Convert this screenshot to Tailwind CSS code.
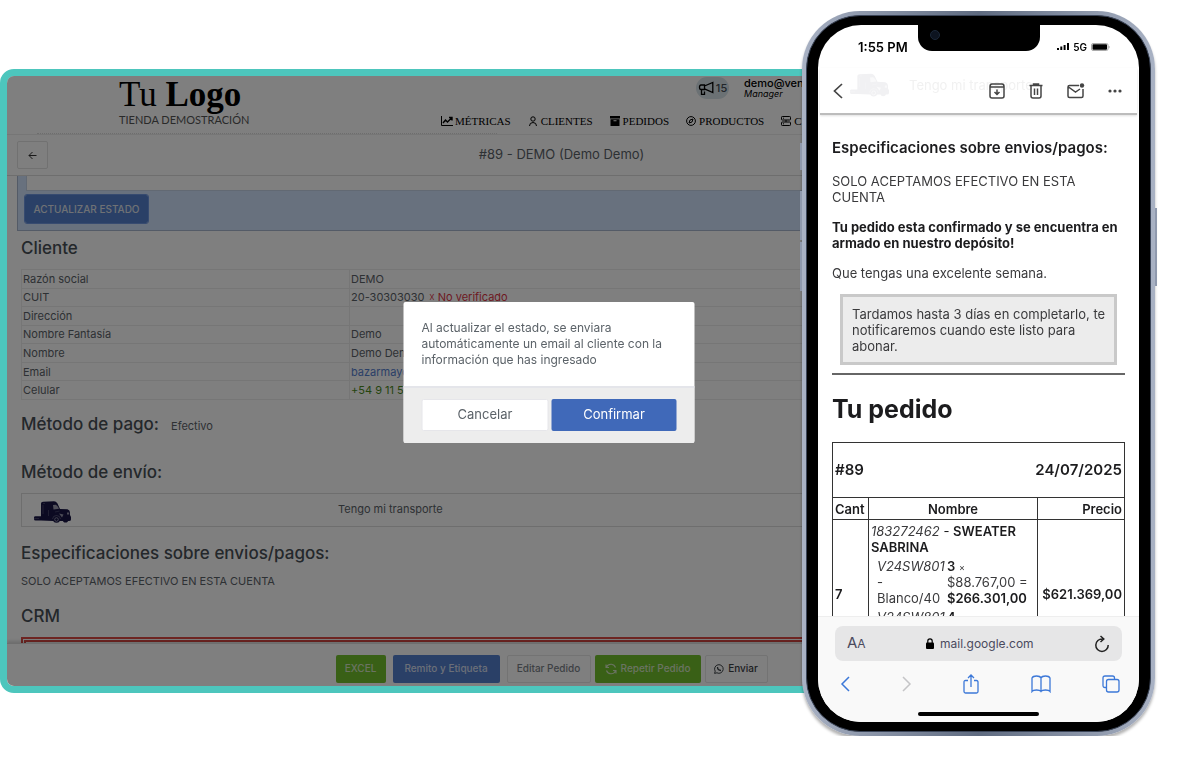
<!DOCTYPE html>
<html lang="es">
<head>
    <meta charset="UTF-8">
    <meta name="viewport" content="width=device-width, initial-scale=1.0">
    <title>Pedido #89 - DEMO</title>
    <script src="https://cdn.jsdelivr.net/npm/@tailwindcss/browser@4"></script>
</head>
<body class="bg-white overflow-hidden font-['Inter','Liberation_Sans',sans-serif]">

<!-- shared truck drawing -->
<svg class="hidden" aria-hidden="true">
    <symbol id="truck" viewBox="0 0 37 22">
        <path d="M7 2.500Q7 .8 9 .7L20 .3Q22 .3 23.500 2.500L26 8L33.500 8.300Q36 9 36 11.500V14L37 16V18.500Q37 20 35 20H19L7 19.500H1.500Q0 19.500 0 18V16.500Q0 15.300 1.500 15.300H7Z" fill="currentColor"/>
        <path d="M19 4L22 3.700Q24.500 5.500 25 7.700L19.500 8.500Z" fill="white" opacity=".6"/>
        <path d="M9 2.500H11M9 4V13M14.500 9V15M25.500 10L21 11M5 17.500H0" stroke="white" stroke-width=".5" opacity=".35"/>
        <path d="M25 12.500L29.500 13.500L28 16.500ZM33 11.500H35.200V13.500H33Z" fill="white" opacity=".55"/>
        <circle cx="22.500" cy="18.300" r="3.500" fill="currentColor"/>
        <path d="M18.500 18Q19 14.500 22.500 14.500T26.500 18" fill="none" stroke="white" stroke-width=".6" opacity=".4"/>
        <circle cx="22.500" cy="18.500" r="1.800" fill="none" stroke="white" stroke-width=".8" opacity=".55"/>
        <circle cx="31.500" cy="19" r="2.600" fill="currentColor"/>
    </symbol>
</svg>

<div class="flex items-start pr-[45px] pt-[11px]">

    <!-- Desktop window -->
    <div class="relative flex-1 min-w-0 mt-[58px] h-[624px] flex flex-col border-[7px] border-[#4dc6bd] rounded-[14px] overflow-hidden bg-white text-[11px] text-[#5b6268]">
        <header class="relative h-[59px] shrink-0 flex border-b border-[#ececec] pl-28 text-black">
            <a href="#" class="w-[140px] flex flex-col">
                <span class="font-['Liberation_Serif',serif] text-[35px] leading-[37px] whitespace-nowrap">Tu <b>Logo</b></span>
                <span class="text-[11px] leading-[13px] text-[#555] whitespace-nowrap font-['Lato',sans-serif]">TIENDA DEMOSTRACIÓN</span>
            </a>
            <div class="ml-auto flex flex-col justify-between pb-[6px] w-[650px]">
                <div class="flex items-start gap-[15px] pl-[255px]">
                    <button class="mt-px w-[33px] h-[22px] rounded-full bg-[#d6e2e8] flex items-center justify-center gap-[2px] text-[#444c54] text-[11px] font-medium">
                        <svg class="w-4 h-4 text-black" viewBox="0 0 16 16" fill="none" stroke="currentColor" stroke-width="1.300"><path d="M6.500 5H3Q1.500 5 1.500 7.200Q1.500 9.500 3 9.500H6.500V5ZM6.500 6L14.800 2.500V12.500L6.500 8.800M3.500 10V14.300H6.500V11.500"/></svg>15
                    </button>
                    <div class="text-[11px] leading-[11px]">
                        <div class="font-medium pt-[2px]">demo@ven</div>
                        <div class="italic text-[9px] leading-[10px]">Manager</div>
                    </div>
                </div>
                <nav class="flex items-center gap-[17px] font-['Liberation_Serif',serif] text-[11px] leading-[14px]">
                    <a href="#" class="flex items-center gap-[2px]"><svg class="w-3 h-3" viewBox="0 0 12 12" fill="none" stroke="currentColor"><path d="M.5 1V10.500H12"/><path d="M2 8L4.500 5L6.500 7L10.500 3M8 2.500H11V5.500" stroke-width="1.400"/></svg>MÉTRICAS</a>
                    <a href="#" class="flex items-center gap-[3px]"><svg class="w-[10px] h-3" viewBox="0 0 10 12" fill="none" stroke="currentColor"><circle cx="5" cy="4" r="2.200"/><path d="M1.500 11Q1.500 7.500 5 7.500T8.500 11"/></svg>CLIENTES</a>
                    <a href="#" class="flex items-center gap-[3px]"><svg class="w-[10px] h-[10px]" viewBox="0 0 10 10" fill="currentColor"><path d="M0 0H10V2.500H0ZM.5 3.200H9.500V10H.5ZM3.500 4.200V5.200H6.500V4.200Z" fill-rule="evenodd"/></svg>PEDIDOS</a>
                    <a href="#" class="flex items-center gap-[3px]"><svg class="w-[10px] h-[10px]" viewBox="0 0 10 10" fill="none" stroke="currentColor"><circle cx="5" cy="5" r="4.400"/><path d="M7 3L6 6L3 7L4 4Z"/></svg>PRODUCTOS</a>
                    <a href="#" class="flex items-center gap-[3px]"><svg class="w-[10px] h-[10px]" viewBox="0 0 10 10" fill="none" stroke="currentColor"><rect x=".5" y=".5" width="9" height="3.500" rx=".8"/><rect x=".5" y="6" width="9" height="3.500" rx=".8"/><path d="M2 2.200H3M2 7.800H3M5 4V6"/></svg>C</a>
                </nav>
            </div>
            <!-- line of text sliding under the sticky header -->
            <div class="absolute left-[30px] bottom-0 w-[460px] border-t border-dotted border-[#dadada]"></div>
        </header>

        <div class="h-[41px] shrink-0 flex items-center border-b border-[#dcdcdc] pl-[10px] pr-4">
            <button aria-label="Volver" class="w-[31px] h-7 border border-[#e2e2e2] rounded-[2px] flex items-center justify-center text-[#333]">
                <svg class="w-[9px] h-[9px]" viewBox="0 0 9 9" fill="none" stroke="currentColor"><path d="M8.500 4.500H1M4.500 1L1 4.500L4.500 8"/></svg>
            </button>
            <h1 class="flex-1 text-center text-[13px]">#89 - DEMO (Demo Demo)</h1>
        </div>

        <main class="flex-1 min-h-0 overflow-hidden">
            <form class="ml-[10px] border-l border-b border-[#a8b6ce] bg-[#d1e3fc] h-[55px] flex flex-col items-start">
                <textarea aria-label="Mensaje" class="block ml-2 w-full h-[15px] shrink-0 resize-none bg-white border-l border-b border-[#c5d2e6]"></textarea>
                <button type="button" class="mt-1 ml-[7px] h-7 w-[123px] shrink-0 rounded-[2px] bg-[#5580cf] outline outline-[#6f97e0] text-[#dfe3ea] text-[10px] font-medium">ACTUALIZAR ESTADO</button>
            </form>

            <div class="px-[14px]">
                <h2 class="pt-[7px] text-[17px] leading-5 font-medium text-[#495057]">Cliente</h2>
                <table class="mt-[11px] w-full h-[131px] border-collapse leading-4 [&_td]:border [&_td]:border-[#ececec] [&_td]:px-px [&_td]:py-0">
                    <tbody>
                    <tr><td class="w-[328px]">Razón social</td><td>DEMO</td></tr>
                    <tr><td>CUIT</td><td>20-30303030 <span class="ml-px text-[#dc3545]">☓ No verificado</span></td></tr>
                    <tr><td>Dirección</td><td></td></tr>
                    <tr><td>Nombre Fantasía</td><td>Demo</td></tr>
                    <tr><td>Nombre</td><td>Demo Demo</td></tr>
                    <tr><td>Email</td><td><a href="#" class="text-[#5580cf]">bazarmayorista</a></td></tr>
                    <tr><td>Celular</td><td class="text-[#4b8a1c]">+54 9 11 5</td></tr>
                    </tbody>
                </table>
                <div class="mt-[14px] flex items-baseline gap-3">
                    <h2 class="text-[17px] leading-5 font-medium text-[#495057]">Método de pago:</h2>
                    <span>Efectivo</span>
                </div>
                <h2 class="mt-[27px] text-[17px] leading-5 font-medium text-[#495057]">Método de envío:</h2>
                <div class="mt-[11px] h-[34px] border border-[#dcdcdc] flex items-center pl-3">
                    <svg class="mt-1 w-[37px] h-[22px] text-[#181545]"><use href="#truck"/></svg>
                    <span class="ml-[267px]">Tengo mi transporte</span>
                </div>
                <h2 class="mt-4 text-[17px] leading-5 font-medium text-[#495057]">Especificaciones sobre envios/pagos:</h2>
                <p class="mt-[10px] leading-4">SOLO ACEPTAMOS EFECTIVO EN ESTA CUENTA</p>
                <h2 class="mt-[17px] text-[17px] leading-5 font-medium text-[#495057]">CRM</h2>
                <div class="mt-[11px] h-10 border-[5px] border-double border-[#dc4a44]"></div>
            </div>
        </main>

        <footer class="h-[43px] shrink-0 flex items-center justify-center pt-[7px] pl-[5px] border-t border-[#ddd] bg-white shadow-[0_-2px_3px_rgba(0,0,0,0.15)] text-[10px] font-medium">
            <button class="h-7 w-[50px] rounded-[2px] bg-[#72c02c] text-[#d5e6c4]">EXCEL</button>
            <button class="ml-[7px] h-7 w-[107px] rounded-[2px] bg-[#5580cf] text-[#d6dff0]">Remito y Etiqueta</button>
            <button class="ml-[7px] h-7 w-[84px] rounded-[2px] border border-[#e6e6e6] text-[#7b8288]">Editar Pedido</button>
            <button class="ml-1 h-7 w-[106px] rounded-[2px] bg-[#72c02c] text-[#d5e6c4] flex items-center justify-center gap-1">
                <svg class="w-3 h-3" viewBox="0 0 12 12" fill="none" stroke="currentColor" stroke-width="1.100"><path d="M1 1.500V4.500H4M1.200 4.300Q3 1 6.500 1.300Q9.500 1.700 10.500 4.500M11 10.500V7.500H8M10.800 7.700Q9 11 5.500 10.700Q2.500 10.300 1.500 7.500"/></svg>Repetir Pedido
            </button>
            <button class="ml-1 h-7 w-[63px] rounded-[2px] border border-[#e6e6e6] text-[#3b4045] flex items-center justify-center gap-1">
                <svg class="w-[10px] h-[10px]" viewBox="0 0 10 10" fill="none" stroke="currentColor"><path d="M.6 9.400L1.200 7.200A4.300 4.300 0 1 1 2.900 8.800Z"/><path d="M3.500 3Q3.500 6.300 7 6.500" stroke-width="1.300"/></svg>Enviar
            </button>
        </footer>

        <div class="absolute inset-0 bg-black/50"></div>

        <!-- Confirmation dialog -->
        <div role="dialog" aria-label="Confirmar" class="absolute left-1/2 top-[226px] -translate-x-1/2 w-[291px] rounded-[2px] overflow-hidden bg-white">
            <p class="p-[18px] pr-[14px] text-[12px] leading-4">Al actualizar el estado, se enviara automáticamente un email al cliente con la información que has ingresado</p>
            <div class="flex gap-[3px] border-t-2 border-[#e4e5ea] bg-[#ededed] px-[18px] pt-[11px] pb-3 text-[13px]">
                <button class="flex-1 h-8 rounded-[2px] border border-[#e6e6ea] bg-white">Cancelar</button>
                <button class="flex-1 h-8 rounded-[2px] bg-[#4069b9] text-white">Confirmar</button>
            </div>
        </div>
    </div>

    <!-- Phone -->
    <div class="relative z-10 -ml-[296px] w-[353px] h-[725px] shrink-0 rounded-[58px] bg-linear-to-r from-[#a9b2c4] via-[#5f6b80] to-[#a9b2c4] p-1 shadow-[0_3px_3px_rgba(0,0,0,0.3)]">
        <div class="absolute -left-[2px] top-[132px] w-[2px] h-[27px] bg-[#8f99ad]"></div>
        <div class="absolute -left-[2px] top-[180px] w-[2px] h-[49px] bg-[#8f99ad]"></div>
        <div class="absolute -left-[2px] top-[231px] w-[2px] h-[49px] bg-[#8f99ad]"></div>
        <div class="absolute -right-[2px] top-[197px] w-[2px] h-[78px] bg-[#8f99ad]"></div>
        <div class="h-full rounded-[54px] bg-black border border-[#3b4558] px-[11px] py-[9px]">
            <div class="relative h-full rounded-[43px] overflow-hidden bg-white flex flex-col text-[13px] leading-4 text-[#3a3a3c]">
                <div class="absolute left-1/2 -translate-x-1/2 top-0 w-[122px] h-[26px] bg-black rounded-b-[14px]">
                    <div class="absolute left-[12px] top-[5px] size-[10px] rounded-full bg-[#0d1420] border border-[#1c2838]"></div>
                </div>

                <div class="h-[43px] shrink-0 flex items-center justify-between pl-10 pr-[29px] text-black font-semibold">
                    <span>1:55 PM</span>
                    <span class="flex items-center gap-[4px] text-[10px]">
                        <svg class="w-3 h-[7px]" viewBox="0 0 12 7"><path d="M0 5H2V7H0ZM3.300 3.500H5.300V7H3.300ZM6.600 2H8.600V7H6.600ZM10 0H12V7H10Z"/></svg>5G
                        <svg class="w-[19px] h-2" viewBox="0 0 19 8"><rect x=".5" y=".5" width="16.500" height="7" rx="1.500" fill="none" stroke="#aaa"/><rect x="1.500" y="1.200" width="14.500" height="5.600" rx=".8"/><path d="M18 3V5.200" stroke="#aaa"/></svg>
                    </span>
                </div>

                <div class="relative mx-[2px] h-[47px] shrink-0 flex items-center pl-[13px] pr-[15px] border-b-2 border-[#bcbcbc] shadow-[0_1px_2px_rgba(0,0,0,0.12)] text-[#444]">
                    <button aria-label="Atrás"><svg class="w-[10px] h-4" viewBox="0 0 10 16" fill="none" stroke="currentColor" stroke-width="1.700"><path d="M9 1L1.500 8L9 15"/></svg></button>
                    <div aria-hidden="true" class="absolute left-[30px] top-[5px] flex items-center gap-5 text-[#f1f1f1]">
                        <svg class="w-[39px] h-6 text-[#f1f1f3]"><use href="#truck"/></svg>Tengo mi transporte
                    </div>
                    <div class="relative ml-auto flex items-center gap-[23px]">
                        <button aria-label="Archivar"><svg class="w-4 h-4" viewBox="0 0 16 16" fill="none" stroke="currentColor" stroke-width="1.500"><path d="M1 3.500Q1 1 3 1H13Q15 1 15 3.500V13Q15 15 13 15H3Q1 15 1 13ZM1 4H15M8 6.500V11M5.500 9L8 11.500L10.500 9"/></svg></button>
                        <button aria-label="Eliminar"><svg class="w-4 h-4" viewBox="0 0 16 16" fill="none" stroke="currentColor" stroke-width="1.500"><path d="M1.500 2.500H14.500M5.500 2V1H10.500V2M3 2.500V13Q3 15 5 15H11Q13 15 13 13V2.500M6.500 5.500V12M9.500 5.500V12"/></svg></button>
                        <button aria-label="No leído"><svg class="w-[18px] h-4" viewBox="0 0 18 16" fill="none" stroke="currentColor" stroke-width="1.500"><path d="M12 2.500H2.500Q1 2.500 1 4V13Q1 14.500 2.500 14.500H14.500Q16 14.500 16 13V6M1.500 4L8.500 9L13 6"/><circle cx="15" cy="2.500" r="2.200" fill="currentColor" stroke="none"/></svg></button>
                        <button aria-label="Más"><svg class="w-[14px] h-4" viewBox="0 0 14 16" fill="currentColor"><circle cx="2" cy="8" r="1.600"/><circle cx="7" cy="8" r="1.600"/><circle cx="12" cy="8" r="1.600"/></svg></button>
                    </div>
                </div>

                <div class="flex-1 min-h-0 overflow-hidden px-[14px]">
                    <h2 class="mt-[23px] text-[15px] leading-5 font-semibold text-[#1c1c1e]">Especificaciones sobre envios/pagos:</h2>
                    <p class="mt-[15px]">SOLO ACEPTAMOS EFECTIVO EN ESTA CUENTA</p>
                    <p class="mt-[14px] font-bold text-[#1c1c1e]">Tu pedido esta confirmado y se encuentra en armado en nuestro depósito!</p>
                    <p class="mt-[14px]">Que tengas una excelente semana.</p>
                    <p class="mt-[13px] mx-2 border-[3px] border-[#c9c9c9] bg-[#ececec] pl-[9px] pr-1 pt-[9px] pb-2">Tardamos hasta 3 días en completarlo, te notificaremos cuando este listo para abonar.</p>
                    <hr class="mt-2 border-t-2 border-[#666]">
                    <h1 class="mt-[18px] text-[25px] leading-8 font-bold text-[#1c1c1e]">Tu pedido</h1>
                    <table class="mt-[17px] w-full table-fixed border-collapse text-[#1c1c1e] [&_.b]:border [&_.b]:border-[#333]">
                        <colgroup><col class="w-9"><col><col class="w-[87px]"></colgroup>
                        <thead>
                        <tr class="h-[55px]">
                            <th colspan="3" class="b px-[2px] text-[15px] font-semibold"><div class="flex justify-between"><span>#89</span><span>24/07/2025</span></div></th>
                        </tr>
                        <tr class="h-[22px]"><th class="b px-[2px] text-left font-semibold">Cant</th><th class="b font-semibold">Nombre</th><th class="b px-[2px] text-right font-semibold">Precio</th></tr>
                        </thead>
                        <tbody>
                        <tr class="h-[148px]">
                            <td class="b px-[2px] font-semibold">7</td>
                            <td class="b px-[2px] pt-[3px] align-top">
                                <div><i class="text-[#3a3a3c]">183272462</i> - <b class="font-semibold">SWEATER SABRINA</b></div>
                                <div class="mt-[3px] pl-[6px] grid grid-cols-[70px_1fr] text-[#3a3a3c]">
                                    <div><i>V24SW801</i><br>-<br>Blanco/40</div>
                                    <div class="whitespace-nowrap"><b class="font-semibold text-[#1c1c1e]">3</b> <small class="text-[9px] leading-none">×</small><br>$88.767,00 =<br><b class="font-semibold text-[#1c1c1e]">$266.301,00</b></div>
                                    <div class="mt-[3px]"><i>V24SW801</i></div>
                                    <div class="mt-[3px]"><b class="font-semibold text-[#1c1c1e]">4</b></div>
                                </div>
                            </td>
                            <td class="b px-[2px] text-right font-semibold">$621.369,00</td>
                        </tr>
                        </tbody>
                    </table>
                </div>

                <div class="h-[106px] shrink-0 bg-[#f9f9f9] border-t border-[#eee] px-[17px] pt-[9px]">
                    <div class="h-[35px] rounded-[8px] bg-[#e6e6e7] flex items-center justify-between px-3 text-[12px] text-[#4a4a5e]">
                        <button class="text-[15px]">A<span class="text-[12px]">A</span></button>
                        <a href="#" class="flex items-center gap-[6px]"><svg class="w-2 h-[11px] text-black" viewBox="0 0 8 11"><rect y="4.500" width="8" height="6.500" rx="1" fill="currentColor"/><path d="M1.800 5V3A2.200 2.200 0 0 1 6.200 3V5" fill="none" stroke="currentColor" stroke-width="1.200"/></svg>mail.google.com</a>
                        <button aria-label="Recargar" class="text-[#222]"><svg class="w-4 h-[18px]" viewBox="0 0 16 18" fill="none" stroke="currentColor" stroke-width="1.500"><path d="M8.500 4A6.200 6.200 0 1 0 14.200 10M6.500 1L9.800 4L6.500 7"/></svg></button>
                    </div>
                    <div class="mt-[11px] pl-[5px] pr-[2px] h-6 flex items-center justify-between text-[#3c78d8]">
                        <button aria-label="Anterior"><svg class="w-[10px] h-4" viewBox="0 0 10 16" fill="none" stroke="currentColor" stroke-width="1.500"><path d="M9 1L2 8L9 15"/></svg></button>
                        <button aria-label="Siguiente" class="text-[#c5c5c7]"><svg class="w-[10px] h-4" viewBox="0 0 10 16" fill="none" stroke="currentColor" stroke-width="1.500"><path d="M1 1L8 8L1 15"/></svg></button>
                        <button aria-label="Compartir"><svg class="w-4 h-5" viewBox="0 0 16 20" fill="none" stroke="currentColor" stroke-width="1.300"><path d="M5 6.500H2.500Q1 6.500 1 8V17.500Q1 19 2.500 19H13.500Q15 19 15 17.500V8Q15 6.500 13.500 6.500H11M8 13V1M5 4L8 1L11 4"/></svg></button>
                        <button aria-label="Marcadores"><svg class="w-5 h-[18px]" viewBox="0 0 20 18" fill="none" stroke="currentColor" stroke-width="1.300"><path d="M10 3Q9 1 5.500 1T1 3V16.500Q2 15 5.500 15T10 16.500Q11 15 14.500 15T19 16.500V3Q18 1 14.500 1T10 3V16.500"/></svg></button>
                        <button aria-label="Pestañas"><svg class="w-[18px] h-[18px]" viewBox="0 0 18 18" fill="none" stroke="currentColor" stroke-width="1.300"><path d="M4.500 12.500H3Q1 12.500 1 10.500V3Q1 1 3 1H10.500Q12.500 1 12.500 3V4.500"/><rect x="4.500" y="4.500" width="12.500" height="12.500" rx="2"/></svg></button>
                    </div>
                    <div class="mx-auto mt-4 w-[121px] h-1 rounded-full bg-black"></div>
                </div>
            </div>
        </div>
    </div>
</div>
</body>
</html>
